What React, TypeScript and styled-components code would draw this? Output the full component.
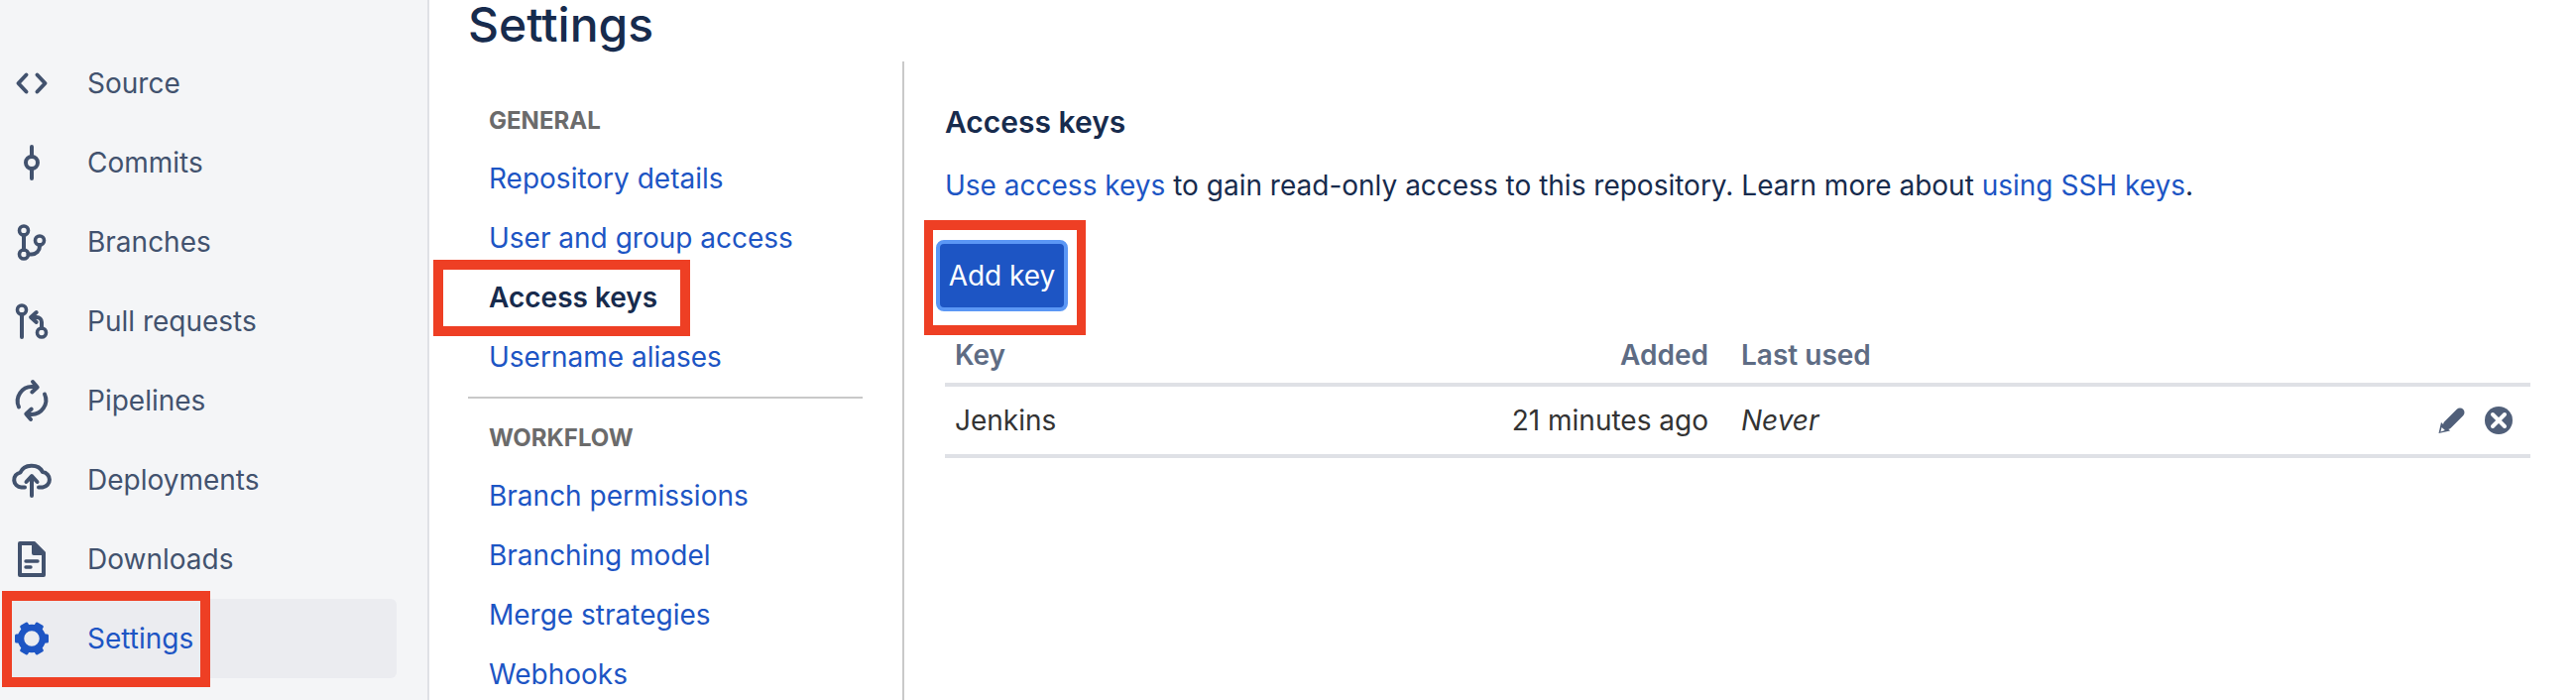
import React from 'react';
import styled, { createGlobalStyle } from 'styled-components';

const GlobalStyle = createGlobalStyle`
  html, body {
    margin: 0;
    padding: 0;
    background: #fff;
    font-family: Inter, "Liberation Sans", sans-serif;
  }
`;

const Icon = ({ children }: { children: React.ReactNode }) => (
  <IconSvg viewBox="0 0 48 48" fill="none" stroke="currentColor" strokeWidth="4" strokeLinecap="round" strokeLinejoin="round">
    {children}
  </IconSvg>
);

const navItems = [
  {
    label: 'Source',
    icon: (
      <Icon>
        <path d="M18.5 15.5 10.5 24l8 8.5M29.5 15.5l8 8.5-8 8.5" />
      </Icon>
    ),
  },
  {
    label: 'Commits',
    icon: (
      <Icon>
        <circle cx="24" cy="24" r="6" />
        <path d="M24 8v10M24 30v10" />
      </Icon>
    ),
  },
  {
    label: 'Branches',
    icon: (
      <Icon>
        <circle cx="16" cy="12.5" r="4.5" strokeWidth="3.6" />
        <circle cx="16" cy="36.5" r="4.5" strokeWidth="3.6" />
        <circle cx="32" cy="22.5" r="4.5" strokeWidth="3.6" />
        <path d="M16 17v15M32 27v1.5a8 8 0 0 1-8 8h-3.5" />
      </Icon>
    ),
  },
  {
    label: 'Pull requests',
    icon: (
      <Icon>
        <circle cx="14" cy="12.5" r="4.5" strokeWidth="3.6" />
        <circle cx="34" cy="35.5" r="4.5" strokeWidth="3.6" />
        <path d="M14 17v23M34 31v-6a5 5 0 0 0-5-5h-5M28.7 15l-5.6 5 5.6 5" />
      </Icon>
    ),
  },
  {
    label: 'Pipelines',
    icon: (
      <Icon>
        <path d="M11 30.5A14.5 14.5 0 0 1 25 10M25 5l4.7 5.5-5.4 5" />
        <path d="M37 17.5A14.5 14.5 0 0 1 23 38M23 43l-4.7-5.5 5.4-5" />
      </Icon>
    ),
  },
  {
    label: 'Deployments',
    icon: (
      <Icon>
        <path d="M17 31.5h-3.5a7.5 7.5 0 0 1-1-14.9A12 10 0 0 1 35 16a7.8 7.8 0 0 1 0 15.5h-4" />
        <path d="M24 40V21M18.5 26l5.5-6 5.5 6" />
      </Icon>
    ),
  },
  {
    label: 'Downloads',
    icon: (
      <Icon>
        <path d="M12 8h14l10 10v22H12z" />
        <path d="M26 8v10h10z" fill="currentColor" />
        <path d="M18 26h12M18 32h5" strokeWidth="3.4" />
      </Icon>
    ),
  },
  {
    label: 'Settings',
    active: true,
    icon: (
      <Icon>
        <circle cx="24" cy="24" r="11" strokeWidth="6.5" />
        {[30, 90, 150, 210, 270, 330].map((angle) => (
          <rect key={angle} x="19.5" y="7" width="9" height="6" rx="1.5" fill="currentColor" stroke="none" transform={`rotate(${angle} 24 24)`} />
        ))}
      </Icon>
    ),
  },
];

const generalLinks = ['Repository details', 'User and group access', 'Access keys', 'Username aliases'];
const workflowLinks = ['Branch permissions', 'Branching model', 'Merge strategies', 'Webhooks'];

const App = () => {
  return (
    <Page>
      <GlobalStyle />
      <Sidebar>
        {navItems.map((item) => (
          <NavItem key={item.label} $active={item.active}>
            {item.icon}
            <span>{item.label}</span>
            {item.active && <SidebarMark />}
          </NavItem>
        ))}
      </Sidebar>
      <Main>
        <Title>Settings</Title>
        <Split>
          <SubNav>
            <GroupLabel>GENERAL</GroupLabel>
            {generalLinks.map((link) =>
              link === 'Access keys' ? (
                <CurrentLink key={link}>
                  {link}
                  <SubNavMark />
                </CurrentLink>
              ) : (
                <SubLink key={link}>{link}</SubLink>
              ),
            )}
            <Divider />
            <GroupLabel>WORKFLOW</GroupLabel>
            {workflowLinks.map((link) => (
              <SubLink key={link}>{link}</SubLink>
            ))}
          </SubNav>
          <Content>
            <Heading>Access keys</Heading>
            <Intro>
              <Link>Use access keys</Link> to gain read-only access to this repository. Learn more about{' '}
              <Link>using SSH keys</Link>.
            </Intro>
            <AddKey>
              Add key
              <ButtonMark />
            </AddKey>
            <HeadRow>
              <span>Key</span>
              <AddedCell>Added</AddedCell>
              <UsedCell>Last used</UsedCell>
            </HeadRow>
            <BodyRow>
              <span>Jenkins</span>
              <AddedCell>21 minutes ago</AddedCell>
              <UsedCell>
                <em>Never</em>
              </UsedCell>
              <Actions>
                <svg width="28" height="28" viewBox="0 0 28 28">
                  <path d="M10.5 18.5 23 6" stroke="#505F79" strokeWidth="9" strokeLinecap="round" />
                  <path d="M1.5 27 4 16l9 8.5z" fill="#505F79" />
                  <path d="M3.4 25.4 4.6 21l3.3 3.1z" fill="#fff" />
                </svg>
                <svg width="28" height="28" viewBox="0 0 28 28">
                  <circle cx="14" cy="14" r="14" fill="#505F79" />
                  <path d="M8 8l12 12M20 8 8 20" stroke="#fff" strokeWidth="4" strokeLinecap="round" />
                </svg>
              </Actions>
            </BodyRow>
          </Content>
        </Split>
      </Main>
    </Page>
  );
};

export default App;

const Page = styled.div`
  display: flex;
  height: 706px;
  overflow: hidden;
  font-size: 28px;
`;

const Sidebar = styled.nav`
  box-sizing: content-box;
  width: 431px;
  flex: none;
  padding-top: 44px;
  background: #f4f5f7;
  border-right: 2px solid #dfe1e6;
`;

const NavItem = styled.div<{ $active?: boolean }>`
  position: relative;
  display: flex;
  align-items: center;
  gap: 32px;
  width: 392px;
  height: 80px;
  margin-left: 8px;
  border-radius: 6px;
  color: ${(p) => (p.$active ? '#1d55c4' : '#42526e')};
  background: ${(p) => (p.$active ? '#ebecf0' : 'transparent')};
`;

const IconSvg = styled.svg`
  width: 48px;
  height: 48px;
  flex: none;
`;

const Mark = styled.div`
  position: absolute;
  box-sizing: border-box;
  border: 10px solid #ee3f24;
  pointer-events: none;
`;

const SidebarMark = styled(Mark)`
  left: -6px;
  top: -8px;
  width: 210px;
  height: 97px;
`;

const SubNavMark = styled(Mark)`
  left: -35px;
  top: -8px;
  width: 259px;
  height: 77px;
`;

const ButtonMark = styled(Mark)`
  left: -16px;
  top: -24px;
  width: 163px;
  height: 116px;
  border-width: 10px 9px;
`;

const Main = styled.main`
  flex: 1;
  padding-left: 39px;
  min-width: 0;
`;

const Title = styled.h1`
  margin: 0;
  height: 62px;
  font-size: 48px;
  line-height: 50px;
  font-weight: 500;
  color: #172b4d;
`;

const Split = styled.div`
  display: flex;
`;

const SubNav = styled.aside`
  width: 398px;
  flex: none;
  padding-top: 32px;
  margin-right: 40px;
`;

const GroupLabel = styled.div`
  height: 56px;
  padding-left: 21px;
  font-size: 24px;
  line-height: 56px;
  font-weight: 700;
  color: #6b6b6b;
`;

const SubLink = styled.div`
  padding-left: 21px;
  line-height: 60px;
  color: #1d55c4;
`;

const CurrentLink = styled(SubLink)`
  position: relative;
  font-weight: 600;
  color: #172b4d;
`;

const Divider = styled.div`
  height: 2px;
  margin: 10px 0 12px;
  background: #c9c9c9;
`;

const Content = styled.section`
  flex: 1;
  height: 644px;
  padding: 41px 46px 0 41px;
  border-left: 2px solid #c9c9c9;
`;

const Heading = styled.h2`
  margin: 0;
  font-size: 30px;
  line-height: 40px;
  font-weight: 600;
  color: #172b4d;
`;

const Intro = styled.p`
  margin: 24px 0 0;
  line-height: 40px;
  color: #172b4d;
`;

const Link = styled.span`
  color: #1d55c4;
`;

const AddKey = styled.button`
  position: relative;
  display: block;
  box-sizing: border-box;
  width: 133px;
  height: 72px;
  margin: 35px 0 16px -9px;
  padding: 0;
  border: 4px solid #5b97f5;
  border-radius: 8px;
  background: #1d55c4;
  color: #fff;
  font: inherit;
`;

const Row = styled.div`
  display: grid;
  grid-template-columns: 370px 400px 1fr auto;
  align-items: center;
  padding-left: 10px;
  border-bottom: 4px solid #dfe1e6;
`;

const HeadRow = styled(Row)`
  height: 60px;
  box-sizing: border-box;
  font-weight: 600;
  color: #5e6c84;
`;

const BodyRow = styled(Row)`
  height: 72px;
  box-sizing: border-box;
  color: #333;
`;

const AddedCell = styled.span`
  text-align: right;
  padding-right: 10px;
`;

const UsedCell = styled.span`
  padding-left: 23px;
`;

const Actions = styled.div`
  display: flex;
  align-items: center;
  gap: 20px;
  padding-right: 18px;
`;
